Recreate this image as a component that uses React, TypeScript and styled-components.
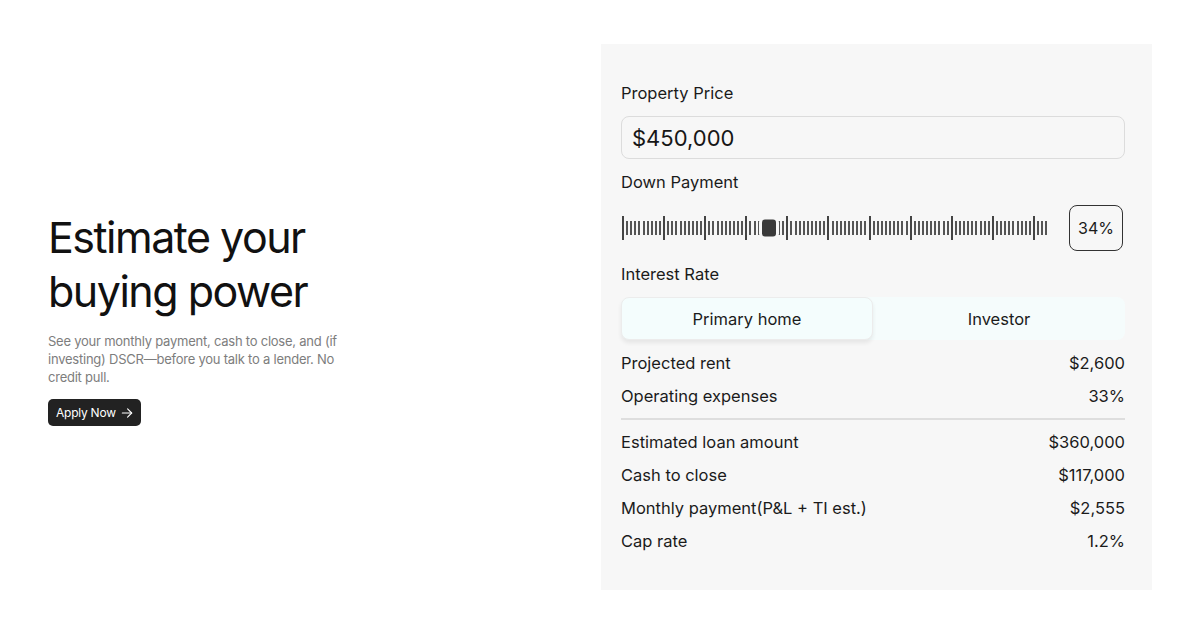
import React from 'react';
import styled, { createGlobalStyle } from 'styled-components';

const GlobalStyle = createGlobalStyle`
  html, body {
    margin: 0;
    padding: 0;
    background: #ffffff;
    font-family: Inter, 'Noto Sans', sans-serif;
    color: #1b1b1b;
  }
`;

const PANEL = '#f7f7f7';

const Page = styled.div`
  display: grid;
  grid-template-columns: 1fr 551px;
  align-items: center;
  padding: 44px 48px 31px 48px;
  min-height: 621px;
  box-sizing: border-box;
`;

const Intro = styled.div`
  display: flex;
  flex-direction: column;
  align-items: flex-start;
  padding-top: 2px;
`;

const Heading = styled.h1`
  margin: 0;
  font-weight: 400;
  font-size: 43px;
  line-height: 54px;
  letter-spacing: -0.035em;
  color: #111;
`;

const Lead = styled.p`
  margin: 14px 0 0;
  max-width: 300px;
  font-size: 13px;
  line-height: 18px;
  letter-spacing: -0.018em;
  color: #7d7d7d;
`;

const ApplyButton = styled.button`
  display: flex;
  align-items: center;
  gap: 4px;
  margin-top: 13px;
  padding: 0 7px 0 8px;
  height: 27px;
  border: none;
  border-radius: 5px;
  background: #222222;
  color: #fff;
  font-family: Inter, sans-serif;
  font-size: 12px;
  letter-spacing: -0.02em;
  cursor: pointer;
`;

const Panel = styled.div`
  display: flex;
  flex-direction: column;
  background: ${PANEL};
  padding: 37px 27px 32px 20px;
`;

const Field = styled.div`
  display: flex;
  flex-direction: column;
  gap: 11px;
  margin-bottom: 11px;
`;

const Label = styled.div`
  font-size: 16.5px;
  line-height: 24px;
  color: #1b1b1b;
`;

const PriceInput = styled.div`
  height: 43px;
  box-sizing: border-box;
  border: 1px solid #dcdcdc;
  border-radius: 8px;
  display: flex;
  align-items: center;
  padding: 0 10px;
  font-size: 22px;
  color: #161616;
`;

const SliderRow = styled.div`
  display: flex;
  align-items: center;
  justify-content: space-between;
  height: 46px;
`;

const Track = styled.div`
  position: relative;
  width: 426px;
  height: 24px;
  display: flex;
  align-items: center;
  justify-content: space-between;
  margin-left: 1px;
`;

const Tick = styled.span<{ $major: boolean }>`
  display: block;
  width: 2px;
  height: ${(p) => (p.$major ? '24px' : '14px')};
  background: ${(p) => (p.$major ? '#444444' : '#555555')};
`;

const Thumb = styled.span`
  position: absolute;
  top: 50%;
  width: 14px;
  height: 17px;
  border-radius: 3px;
  background: #3a3a3a;
  transform: translate(-50%, -50%);
  box-shadow: 0 0 0 3px ${PANEL};
`;

const PercentBox = styled.div`
  width: 54px;
  height: 46px;
  box-sizing: border-box;
  border: 1px solid #333;
  border-radius: 8px;
  display: flex;
  align-items: center;
  justify-content: center;
  font-size: 16px;
  margin-right: 2px;
`;

const Tabs = styled.div`
  display: grid;
  grid-template-columns: 1fr 1fr;
  height: 43px;
  border-radius: 8px;
  background: #f5fcfc;
`;

const Tab = styled.div<{ $active?: boolean }>`
  display: flex;
  align-items: center;
  justify-content: center;
  font-size: 16.5px;
  color: #1b1b1b;
  border-radius: 8px;
  background: ${(p) => (p.$active ? '#f4fdfd' : 'transparent')};
  border: ${(p) => (p.$active ? '1px solid #ececec' : '1px solid transparent')};
  box-shadow: ${(p) => (p.$active ? '0 3px 4px rgba(0,0,0,0.07)' : 'none')};
`;

const Rows = styled.div`
  display: flex;
  flex-direction: column;
  margin-top: -4.5px;
`;

const Row = styled.div`
  display: flex;
  justify-content: space-between;
  align-items: center;
  height: 33px;
  font-size: 16.5px;
  color: #1b1b1b;
`;

const Divider = styled.div`
  height: 2px;
  background: #dedede;
  margin: 5px 0 6px;
`;

const ArrowIcon = () => (
  <svg width="14" height="14" viewBox="0 0 24 24" fill="none" stroke="currentColor" strokeWidth="1.9" strokeLinecap="round" strokeLinejoin="round">
    <path d="M4 12h16" />
    <path d="M13 5l7 7-7 7" />
  </svg>
);

const TICKS = 104;
const DOWN = 34.5;

export default function App() {
  return (
    <>
      <GlobalStyle />
      <Page>
        <Intro>
          <Heading>
            Estimate your
            <br />
            buying power
          </Heading>
          <Lead>
            See your monthly payment, cash to close, and (if investing) DSCR—before you talk to a lender. No credit pull.
          </Lead>
          <ApplyButton>
            Apply Now <ArrowIcon />
          </ApplyButton>
        </Intro>

        <Panel>
          <Field>
            <Label>Property Price</Label>
            <PriceInput>$450,000</PriceInput>
          </Field>
          <Field>
            <Label>Down Payment</Label>
            <SliderRow>
              <Track>
                {Array.from({ length: TICKS }, (_, i) => (
                  <Tick key={i} $major={i % 10 === 0} />
                ))}
                <Thumb style={{ left: `${DOWN}%` }} />
              </Track>
              <PercentBox>34%</PercentBox>
            </SliderRow>
          </Field>
          <Field>
            <Label>Interest Rate</Label>
            <Tabs>
              <Tab $active>Primary home</Tab>
              <Tab>Investor</Tab>
            </Tabs>
          </Field>
          <Rows>
            <Row>
              <span>Projected rent</span>
              <span>$2,600</span>
            </Row>
            <Row>
              <span>Operating expenses</span>
              <span>33%</span>
            </Row>
            <Divider />
            <Row>
              <span>Estimated loan amount</span>
              <span>$360,000</span>
            </Row>
            <Row>
              <span>Cash to close</span>
              <span>$117,000</span>
            </Row>
            <Row>
              <span>Monthly payment(P&amp;L + TI est.)</span>
              <span>$2,555</span>
            </Row>
            <Row>
              <span>Cap rate</span>
              <span>1.2%</span>
            </Row>
          </Rows>
        </Panel>
      </Page>
    </>
  );
}
